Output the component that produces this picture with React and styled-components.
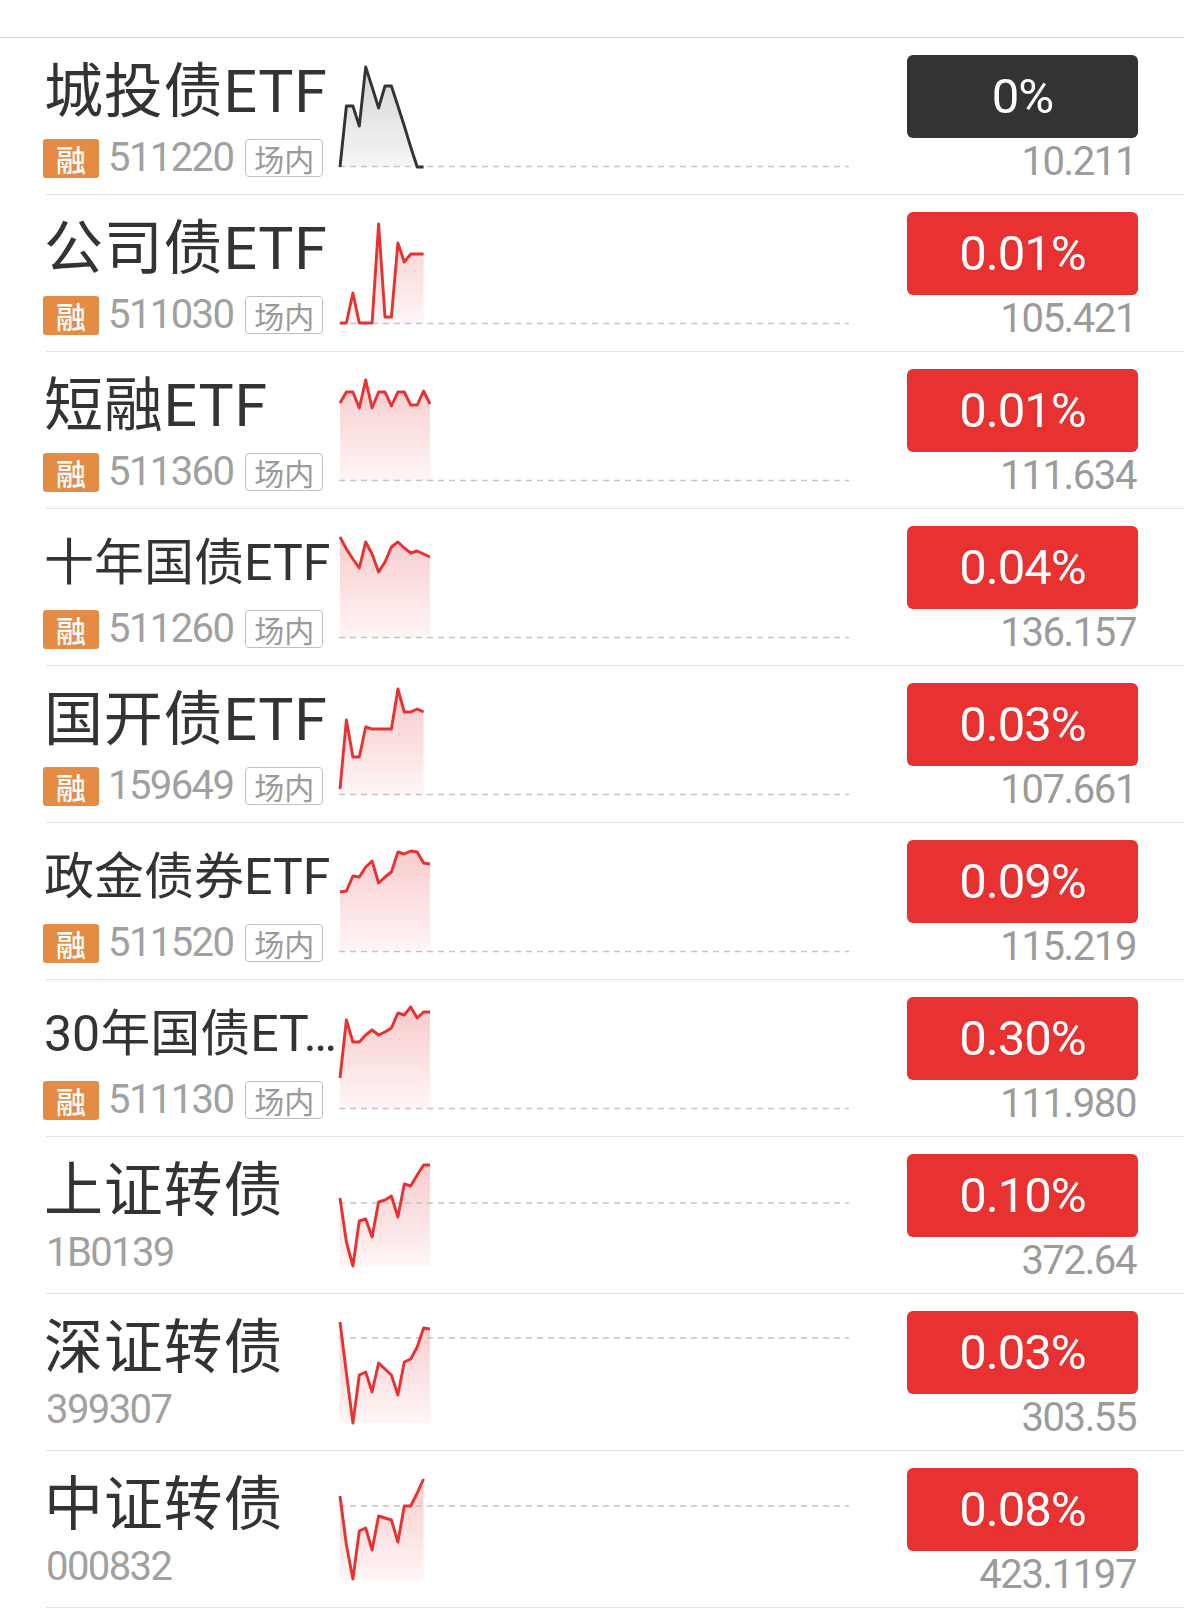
import React from 'react';
import styled, { createGlobalStyle } from 'styled-components';

const GlobalStyle = createGlobalStyle`
  html, body {
    margin: 0;
    padding: 0;
    background: #ffffff;
  }
  body {
    font-family: Roboto, "Noto Sans CJK SC", sans-serif;
  }
`;

const RED = '#e83232';
const DARK = '#333333';

// y values are measured from the top of each row (row is 157px tall)
const funds = [
  {
    name: '城投债ETF', size: 59, code: '511220', margin: true, pct: '0%', price: '10.211', flat: true, base: 129.5,
    line: [130, 69, 69, 89, 30, 50, 71, 49, 49, 69, 89, 110, 130, 130]
  },
  {
    name: '公司债ETF', size: 59, code: '511030', margin: true, pct: '0.01%', price: '105.421', base: 129.5,
    line: [129, 129, 99, 129, 129, 129, 30, 123, 123, 49, 68, 60, 60, 60]
  },
  {
    name: '短融ETF', size: 59, code: '511360', margin: true, pct: '0.01%', price: '111.634', base: 129.5,
    line: [52, 41, 41, 57, 29, 57, 41, 41, 55, 41, 41, 54, 54, 40, 53]
  },
  {
    name: '十年国债ETF', size: 50, code: '511260', margin: true, pct: '0.04%', price: '136.157', base: 129.5,
    line: [29, 41, 51, 60, 34, 46, 64, 54, 39, 34, 40, 45, 43, 46, 49]
  },
  {
    name: '国开债ETF', size: 59, code: '159649', margin: true, pct: '0.03%', price: '107.661', base: 129.5,
    line: [124, 55, 92, 92, 62, 64, 64, 64, 64, 24, 47, 47, 44, 47]
  },
  {
    name: '政金债券ETF', size: 50, code: '511520', margin: true, pct: '0.09%', price: '115.219', base: 129.5,
    line: [70, 69, 54, 55, 45, 39, 61, 55, 50, 30, 32, 29, 30, 41, 42]
  },
  {
    name: '30年国债ET…', size: 50, code: '511130', margin: true, pct: '0.30%', price: '111.980', base: 129.5,
    line: [99, 41, 63, 63, 56, 51, 56, 53, 49, 34, 36, 28, 39, 33, 33]
  },
  {
    name: '上证转债', size: 59, code: '1B0139', pct: '0.10%', price: '372.64', base: 67,
    line: [62, 106, 130, 85, 83, 101, 66, 64, 60, 81, 48, 50, 39, 29, 29]
  },
  {
    name: '深证转债', size: 59, code: '399307', pct: '0.03%', price: '303.55', base: 45,
    line: [29, 80, 130, 82, 79, 99, 70, 76, 82, 102, 69, 66, 54, 35, 36]
  },
  {
    name: '中证转债', size: 59, code: '000832', pct: '0.08%', price: '423.1197', base: 56,
    line: [46, 95, 129, 81, 78, 100, 66, 68, 70, 92, 56, 56, 43, 29]
  }
];

const STEP = 6.43;
const BOTTOM = 130;

const Sparkline = ({ id, line, base, flat }) => {
  const pts = line.map((y, i) => [1 + i * STEP, y]);
  const poly = pts.map(p => `${p[0].toFixed(1)},${p[1]}`).join(' ');
  const lastX = pts[pts.length - 1][0].toFixed(1);
  const area = `1,${BOTTOM} ${poly} ${lastX},${BOTTOM}`;
  const stroke = flat ? DARK : RED;

  return (
    <ChartSvg width="510" height="156" viewBox="0 1 510 156">
      <defs>
        <linearGradient id={id} x1="0" y1="25" x2="0" y2={BOTTOM} gradientUnits="userSpaceOnUse">
          {flat ? (
            <>
              <stop offset="0" stopColor="#d2d2d2" />
              <stop offset="1" stopColor="#f6f6f6" />
            </>
          ) : (
            <>
              <stop offset="0" stopColor="#f7c9ca" />
              <stop offset="1" stopColor="#fff6f6" />
            </>
          )}
        </linearGradient>
      </defs>
      <polygon points={area} fill={`url(#${id})`} />
      <line x1="0" y1={base} x2="510" y2={base} stroke="#c4c4c4" strokeWidth="1.5" strokeDasharray="6 5" />
      <polyline points={poly} fill="none" stroke={stroke} strokeWidth="2.9" strokeLinejoin="round" />
    </ChartSvg>
  );
};

const App = () => {
  return (
    <>
      <GlobalStyle />
      <Page>
        <List>
          {funds.map((f, idx) => (
            <Row key={f.code}>
              <Info>
                <Title size={f.size}>{f.name}</Title>
                <SubLine compact={!f.margin}>
                  {f.margin && <MarginBadge>融</MarginBadge>}
                  <Code>{f.code}</Code>
                  {f.margin && <MarketTag>场内</MarketTag>}
                </SubLine>
              </Info>
              <Sparkline id={`fill-${idx}`} line={f.line} base={f.base} flat={f.flat} />
              <Quote>
                <ChangeBadge flat={f.flat}>{f.pct}</ChangeBadge>
                <Price>{f.price}</Price>
              </Quote>
            </Row>
          ))}
        </List>
      </Page>
    </>
  );
};

const Page = styled.div`
  padding-top: 37px;
  width: 1184px;
  min-height: 1624px;
  box-sizing: border-box;
  background: #ffffff;
`;

const List = styled.div`
  border-top: 1px solid #d9d9d9;
`;

const Row = styled.div`
  display: flex;
  height: 157px;
  box-sizing: border-box;
  margin-left: 46px;
  border-bottom: 1px solid #e3e3e3;
`;

const Info = styled.div`
  width: 293px;
  flex-shrink: 0;
  display: flex;
  flex-direction: column;
  padding-top: 12px;
  box-sizing: border-box;
`;

const Title = styled.div`
  height: 84px;
  margin-left: -2px;
  line-height: 84px;
  font-family: Roboto, "Noto Sans CJK SC", sans-serif;
  font-size: ${props => props.size}px;
  letter-spacing: ${props => props.size > 55 ? '0.8px' : '0'};
  color: #333333;
  white-space: nowrap;
`;

const SubLine = styled.div`
  display: flex;
  align-items: center;
  height: 40px;
  margin-top: ${props => props.compact ? '0px' : '4px'};
`;

const MarginBadge = styled.span`
  width: 56px;
  height: 39px;
  margin-left: -3px;
  margin-right: 9px;
  border-radius: 3px;
  background: #e48c45;
  color: #ffffff;
  font-family: "Noto Sans CJK SC", sans-serif;
  font-size: 30px;
  font-weight: 500;
  display: flex;
  align-items: center;
  justify-content: center;
`;

const Code = styled.span`
  font-family: Roboto, "Liberation Sans", sans-serif;
  font-size: 40px;
  line-height: 40px;
  letter-spacing: -1.6px;
  color: #a0a0a0;
`;

const MarketTag = styled.span`
  width: 78px;
  height: 38px;
  margin-left: 12px;
  box-sizing: border-box;
  border: 1px solid #c0c0c0;
  border-radius: 4px;
  color: #9a9a9a;
  font-family: "Noto Sans CJK SC", sans-serif;
  font-size: 30px;
  display: flex;
  align-items: center;
  justify-content: center;
`;

const ChartSvg = styled.svg`
  flex-shrink: 0;
  display: block;
  overflow: visible;
`;

const Quote = styled.div`
  flex: 1;
  display: flex;
  flex-direction: column;
  align-items: flex-end;
  padding-right: 46px;
`;

const ChangeBadge = styled.div`
  width: 231px;
  height: 83px;
  margin-top: 17px;
  border-radius: 6px;
  background: ${props => props.flat ? DARK : RED};
  color: #ffffff;
  font-family: Roboto, "Liberation Sans", sans-serif;
  font-size: 49px;
  letter-spacing: -1px;
  display: flex;
  align-items: center;
  justify-content: center;
`;

const Price = styled.div`
  margin-top: 4px;
  margin-right: 2px;
  font-family: Roboto, "Liberation Sans", sans-serif;
  font-size: 40px;
  line-height: 40px;
  letter-spacing: -1.4px;
  color: #9b9b9b;
`;

export default App;
